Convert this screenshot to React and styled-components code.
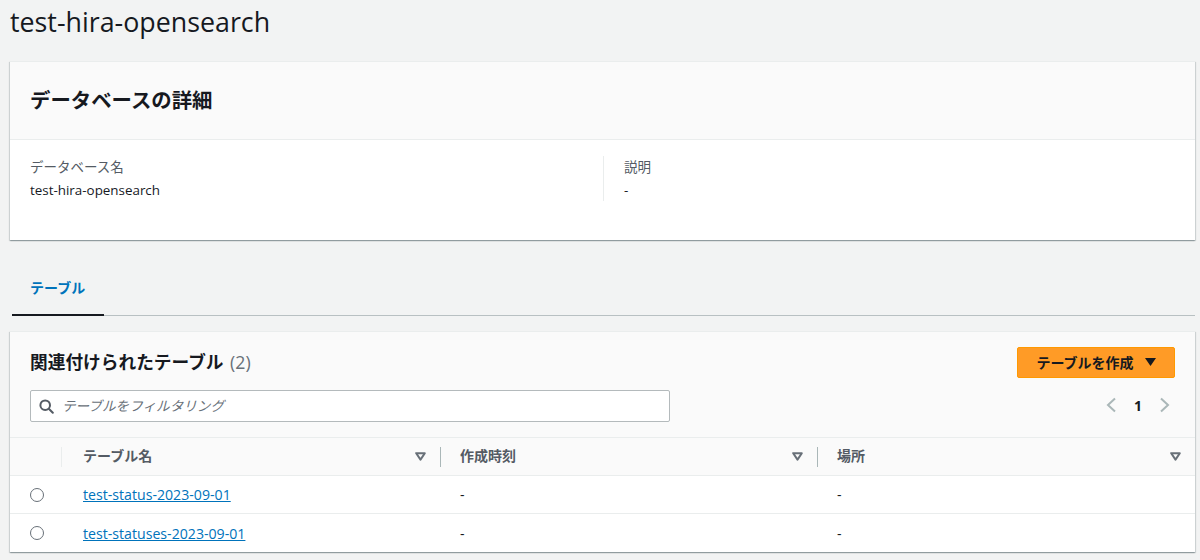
import React from 'react'
import styled, { createGlobalStyle } from 'styled-components'

const FONT = `"Open Sans", "Noto Sans CJK JP", sans-serif`

const Global = createGlobalStyle`
  html, body {
    margin: 0;
    padding: 0;
    background: #f2f3f3;
    font-family: ${FONT};
    color: #16191f;
  }
  * { box-sizing: border-box; }
`

const columns = [
  { name: 'テーブル名', width: 379, pad: 21 },
  { name: '作成時刻', width: 377, pad: 19 },
  { name: '場所', width: 377, pad: 19 },
]

const rows = [
  { name: 'test-status-2023-09-01' },
  { name: 'test-statuses-2023-09-01' },
]

function SortIcon() {
  return (
    <SortMark width="11" height="9" viewBox="0 0 11 9">
      <path d="M1.2 1.2h8.6L5.5 7.6z" fill="none" stroke="#687078" strokeWidth="2" strokeLinejoin="round" />
    </SortMark>
  )
}

function SearchIcon() {
  return (
    <svg width="15" height="15" viewBox="0 0 15 15">
      <circle cx="6.2" cy="6.2" r="4.8" fill="none" stroke="#545b64" strokeWidth="2" />
      <path d="M9.8 9.8l4 4" stroke="#545b64" strokeWidth="2" strokeLinecap="round" />
    </svg>
  )
}

function Chevron({ right }) {
  return (
    <svg width="11" height="16" viewBox="0 0 11 16">
      <path d={right ? 'M2 1.5L9 8l-7 6.5' : 'M9 1.5L2 8l7 6.5'} fill="none" stroke="#aab7b8" strokeWidth="2" />
    </svg>
  )
}

export default function App() {
  return (
    <Page>
      <Global />
      <Title>test-hira-opensearch</Title>

      <Card>
        <DetailHeader>データベースの詳細</DetailHeader>
        <DetailBody>
          <DetailColumn>
            <Label>データベース名</Label>
            <Value>test-hira-opensearch</Value>
          </DetailColumn>
          <DetailColumn $divided>
            <Label>説明</Label>
            <Value>-</Value>
          </DetailColumn>
        </DetailBody>
      </Card>

      <Tabs>
        <ActiveTab>テーブル</ActiveTab>
      </Tabs>

      <Card>
        <TableHeader>
          <TopRow>
            <Heading>関連付けられたテーブル <Count>(2)</Count></Heading>
            <CreateButton>
              テーブルを作成
              <svg width="11" height="8" viewBox="0 0 11 8">
                <path d="M0 0h11L5.5 8z" fill="#16191f" />
              </svg>
            </CreateButton>
          </TopRow>
          <FilterRow>
            <Filter>
              <SearchIcon />
              <Placeholder>テーブルをフィルタリング</Placeholder>
            </Filter>
            <Pager>
              <Chevron />
              <PageNumber>1</PageNumber>
              <Chevron right />
            </Pager>
          </FilterRow>
        </TableHeader>

        <HeadRow>
          <RadioHead />
          {columns.map((c, i) => (
            <HeadCell key={c.name} $w={c.width} $pad={c.pad}>
              {c.name}
              <SortIcon />
              {i < 2 && <Divider />}
            </HeadCell>
          ))}
        </HeadRow>

        {rows.map((r, i) => (
          <Row key={r.name} $last={i === rows.length - 1}>
            <RadioCell><Radio /></RadioCell>
            <Cell $w={columns[0].width} $pad={columns[0].pad}><TableLink href="#">{r.name}</TableLink></Cell>
            <Cell $w={columns[1].width} $pad={columns[1].pad}>-</Cell>
            <Cell $w={columns[2].width} $pad={columns[2].pad}>-</Cell>
          </Row>
        ))}
      </Card>
    </Page>
  )
}

const Page = styled.div`
  width: 1200px;
  height: 560px;
  overflow: hidden;
  padding: 0 5px 0 10px;
`
const Title = styled.h1`
  margin: 0;
  height: 61px;
  padding-top: 4px;
  font-size: 26.8px;
  font-weight: 400;
  line-height: 36px;
`
const Card = styled.section`
  background: #fff;
  box-shadow: 0 1px 1px 0 rgba(0, 28, 36, 0.22), 1px 1px 1px 0 rgba(0, 28, 36, 0.12), -1px 1px 1px 0 rgba(0, 28, 36, 0.12);
  border-top: 1px solid #eaeded;
`
const DetailHeader = styled.h2`
  margin: 0;
  height: 78px;
  padding: 0 0 4px 20px;
  display: flex;
  align-items: center;
  background: #fafafa;
  border-bottom: 1px solid #eaeded;
  font-size: 20.4px;
  font-weight: 700;
`
const DetailBody = styled.div`
  height: 100px;
  padding: 16px 0 0 20px;
  display: flex;
`
const DetailColumn = styled.div`
  width: 573px;
  height: 45px;
  padding-left: ${p => (p.$divided ? '20px' : '0')};
  border-left: ${p => (p.$divided ? '1px solid #eaeded' : 'none')};
`
const Label = styled.div`
  font-size: 13.5px;
  line-height: 22px;
  color: #545b64;
`
const Value = styled.div`
  font-size: 13.4px;
  line-height: 24px;
`
const Tabs = styled.div`
  margin: 30px 0 15px 2px;
  height: 46px;
  border-bottom: 1px solid #b8c0c2;
`
const ActiveTab = styled.div`
  width: 92px;
  height: 46px;
  padding-left: 18px;
  padding-top: 7px;
  line-height: 22px;
  font-size: 14px;
  font-weight: 700;
  color: #0073bb;
  border-bottom: 2px solid #16191f;
`
const TableHeader = styled.div`
  height: 106px;
  padding: 15px 20px 0;
  background: #fafafa;
  border-bottom: 1px solid #eaeded;
`
const TopRow = styled.div`
  display: flex;
  justify-content: space-between;
  align-items: center;
  height: 31px;
`
const Heading = styled.h2`
  margin: 0;
  padding-bottom: 3px;
  font-size: 17.7px;
  font-weight: 700;
`
const Count = styled.span`
  margin-left: 2px;
  font-weight: 400;
  color: #687078;
`
const CreateButton = styled.button`
  width: 158px;
  height: 31px;
  padding: 0 0 2px;
  display: flex;
  align-items: center;
  justify-content: center;
  gap: 11px;
  border: 1px solid #ff9900;
  border-radius: 2px;
  background: #ff9b26;
  color: #16191f;
  font-family: ${FONT};
  font-size: 14px;
  font-weight: 700;
`
const FilterRow = styled.div`
  display: flex;
  justify-content: space-between;
  align-items: center;
  margin-top: 12px;
`
const Filter = styled.div`
  width: 640px;
  height: 32px;
  display: flex;
  align-items: center;
  gap: 8px;
  padding-left: 8px;
  background: #fff;
  border: 1px solid #b4babc;
  border-radius: 2px;
`
const Placeholder = styled.span`
  padding-bottom: 2px;
  font-size: 13.6px;
  font-style: italic;
  color: #687078;
`
const Pager = styled.div`
  display: flex;
  align-items: center;
  gap: 17px;
  padding: 0 5px 2px 0;
`
const PageNumber = styled.span`
  font-size: 14px;
  font-weight: 700;
`
const HeadRow = styled.div`
  display: flex;
  height: 38px;
  background: #fafafa;
  border-bottom: 1px solid #eaeded;
`
const RadioHead = styled.div`
  width: 52px;
  position: relative;
  &::after {
    content: '';
    position: absolute;
    right: 0;
    top: 9px;
    height: 20px;
    border-right: 1px solid #eaeded;
  }
`
const HeadCell = styled.div`
  position: relative;
  width: ${p => p.$w}px;
  padding: 0 15px 3px ${p => p.$pad}px;
  display: flex;
  align-items: center;
  justify-content: space-between;
  font-size: 14px;
  font-weight: 700;
  color: #545b64;
  &:last-child {
    padding-right: 14px;
  }
`
const SortMark = styled.svg`
  margin-top: 2px;
`
const Divider = styled.span`
  position: absolute;
  right: 0;
  top: 9px;
  height: 20px;
  border-right: 1px solid #aab7b8;
`
const Row = styled.div`
  display: flex;
  height: 38px;
  align-items: center;
  border-bottom: ${p => (p.$last ? 'none' : '1px solid #eaeded')};
`
const RadioCell = styled.div`
  width: 52px;
  padding-left: 20px;
  display: flex;
`
const Radio = styled.span`
  width: 14px;
  height: 14px;
  border-radius: 50%;
  border: 1px solid #687078;
  background: #fff;
`
const Cell = styled.div`
  width: ${p => p.$w}px;
  padding-left: ${p => p.$pad}px;
  font-size: 14.15px;
  color: #16191f;
`
const TableLink = styled.a`
  color: #0073bb;
  text-decoration: underline;
`
